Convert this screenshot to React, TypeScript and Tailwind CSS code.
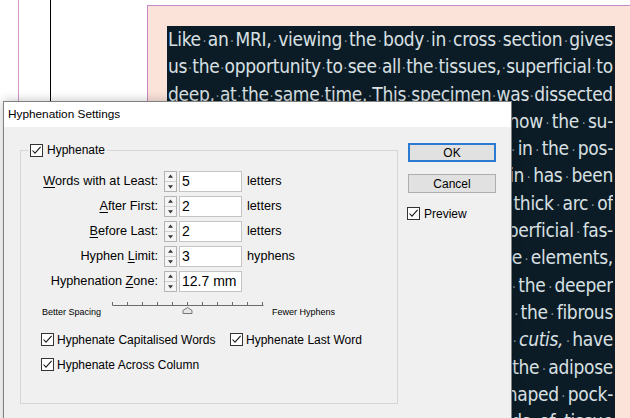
import React from "react";

const topLines = [
  "Like an MRI, viewing the body in cross section gives",
  "us the opportunity to see all the tissues, superficial to",
  "deep, at the same time. This specimen was dissected",
];

const sideLines = [
  "from the back of the right thigh to show the su-",
  "perficial structures that lie in the pos-",
  "terior region. The skin has been",
  "lifted away to reveal the thick arc of",
  "fat that forms the superficial fas-",
  "cia. Between these elements,",
  "and extending toward the deeper",
  "layers of the thigh, the fibrous",
  "bands, the *retinacula *cutis, have",
  "been cleaned to show the adipose",
  "tissue sitting in small, oddly shaped pock-",
  "ets between the strands of tissue",
];

const Words = ({ text, fixed }: { text: string; fixed?: boolean }) => (
  <>
    {text.split(" ").map((w, i) => (
      <React.Fragment key={i}>
        {i > 0 && (
          <span className={fixed ? "w-[9px] shrink-0 text-center text-[14px] text-[#8596a1]" : "text-[14px] text-[#8596a1]"}>·</span>
        )}
        <span className={w.startsWith("*") ? "shrink-0 italic" : "shrink-0"}>{w.replace("*", "")}</span>
      </React.Fragment>
    ))}
  </>
);

const Check = () => (
  <span className="flex h-[13px] w-[13px] shrink-0 items-center justify-center border border-[#333] bg-white">
    <svg width="11" height="11" viewBox="0 0 11 11">
      <path d="M1.5 5.5 L4 8.2 L9.6 1.8" fill="none" stroke="#1a1a1a" strokeWidth="1.1" />
    </svg>
  </span>
);

const Spinner = () => (
  <svg width="13" height="21" viewBox="0 0 13 21" className="shrink-0">
    <rect x="0.5" y="0.5" width="12" height="20" fill="#f5f5f5" stroke="#b4b4b4" />
    <line x1="1" y1="10.5" x2="12" y2="10.5" stroke="#cfcfcf" />
    <path d="M6.5 3.5 L9 6.8 H4 Z" fill="#333" />
    <path d="M4 14.2 H9 L6.5 17.5 Z" fill="#333" />
  </svg>
);

type Row = { pre: string; key: string; post: string; value: string; unit: string };

const rows: Row[] = [
  { pre: "", key: "W", post: "ords with at Least:", value: "5", unit: "letters" },
  { pre: "", key: "A", post: "fter First:", value: "2", unit: "letters" },
  { pre: "", key: "B", post: "efore Last:", value: "2", unit: "letters" },
  { pre: "Hyphen ", key: "L", post: "imit:", value: "3", unit: "hyphens" },
  { pre: "Hyphenation ", key: "Z", post: "one:", value: "12.7 mm", unit: "" },
];

const Slider = () => (
  <svg width="152" height="16" viewBox="0 0 152 16" className="shrink-0">
    <line x1="0.5" y1="5.5" x2="151.5" y2="5.5" stroke="#6b6b6b" />
    {Array.from({ length: 11 }).map((_, i) => (
      <line key={i} x1={0.5 + i * 15} y1="2" x2={0.5 + i * 15} y2="5.5" stroke="#6b6b6b" />
    ))}
    <path d="M71 13.5 V10.5 L75.5 7.5 L80 10.5 V13.5 Z" fill="#e6e6e6" stroke="#777" />
  </svg>
);

export default function App() {
  return (
    <div className="relative flex h-[418px] w-[630px] overflow-hidden bg-white">
      {/* page guides */}
      <div className="w-[18px] shrink-0" />
      <div className="w-px shrink-0 bg-[#d394cc]" />
      <div className="w-[31px] shrink-0" />
      <div className="w-px shrink-0 bg-black" />
      <div className="w-[96px] shrink-0" />
      <div className="mt-[5px] flex-1 border-l border-t border-[#c88ac6] bg-[#fbe3d9] pl-[19px] pt-[20px]">
        <div className="h-full w-[448px] bg-[#0c1c26] pl-[1px] pr-[2px] font-['DejaVu_Sans_Condensed',Lato,sans-serif] text-[19px] leading-[27.3px] tracking-[-0.3px] text-[#d9e0e4]">
          {topLines.map((l, i) => (
            <div key={i} className="flex h-[27.3px] items-baseline justify-between overflow-hidden whitespace-nowrap">
              <Words text={l} />
            </div>
          ))}
          {sideLines.map((l, i) => (
            <div key={i} className="flex h-[27.3px] items-baseline justify-end overflow-hidden whitespace-nowrap">
              <Words text={l} fixed />
            </div>
          ))}
        </div>
      </div>

      {/* dialog window */}
      <div className="absolute left-[3px] top-[101px] h-[330px] w-[509px] border border-[#808080] bg-[#f0f0f0] font-['Liberation_Sans',Arial,sans-serif] text-[12px] text-black shadow-[0_0_10px_rgba(0,0,0,0.25)]">
        <div className="flex h-[25px] items-center bg-white pl-[4px] text-[11.8px]">Hyphenation Settings</div>
        <div className="flex items-start pl-[16px] pt-[16px]">
          <fieldset className="w-[378px] border border-[#d6d6d6]">
            <legend className="ml-[7px] h-[14px] px-[2px]">
              <div className="flex h-[14px] items-center gap-[4px]">
                <Check />
                <span>Hyphenate</span>
              </div>
            </legend>
            <div className="pb-[31px] pt-[14px]">
              <div className="flex flex-col gap-[4px] text-[12.7px]">
                {rows.map((r, i) => (
                  <div key={i} className="flex h-[21px] items-center">
                    <span className="w-[137px] whitespace-nowrap text-right">
                      {r.pre}
                      <span className="underline underline-offset-2">{r.key}</span>
                      {r.post}
                    </span>
                    <span className="ml-[6px]">
                      <Spinner />
                    </span>
                    <div className="ml-[2px] flex h-[21px] w-[63px] items-center border border-[#c4c4c4] bg-white pl-[2px] text-[14px]">
                      {r.value}
                    </div>
                    <span className="ml-[5px]">{r.unit}</span>
                  </div>
                ))}
              </div>
              <div className="mt-[8px] flex h-[18px] items-start pl-[21px]">
                <span className="mt-[6px] w-[70px] text-[9px] leading-[12px]">Better Spacing</span>
                <Slider />
                <span className="ml-[8px] mt-[6px] text-[9px] leading-[12px]">Fewer Hyphens</span>
              </div>
              <div className="mt-[14px] flex h-[15px] items-center pl-[20px]">
                <div className="flex w-[189px] items-center gap-[3px]">
                  <Check />
                  <span>Hyphenate Capitalised Words</span>
                </div>
                <div className="flex items-center gap-[3px]">
                  <Check />
                  <span>Hyphenate Last Word</span>
                </div>
              </div>
              <div className="mt-[10px] flex h-[15px] items-center gap-[3px] pl-[20px]">
                <Check />
                <span>Hyphenate Across Column</span>
              </div>
            </div>
          </fieldset>
          <div className="ml-[10px] flex flex-col">
            <button className="h-[19px] w-[88px] border-2 border-[#2b7bd0] bg-[#e1e1e1] text-[12px] leading-none">OK</button>
            <button className="mt-[12px] h-[19px] w-[88px] border border-[#adadad] bg-[#e1e1e1] text-[12px] leading-none">Cancel</button>
            <div className="-ml-[1px] mt-[14px] flex h-[13px] items-center gap-[4px]">
              <Check />
              <span>Preview</span>
            </div>
          </div>
        </div>
      </div>
    </div>
  );
}
